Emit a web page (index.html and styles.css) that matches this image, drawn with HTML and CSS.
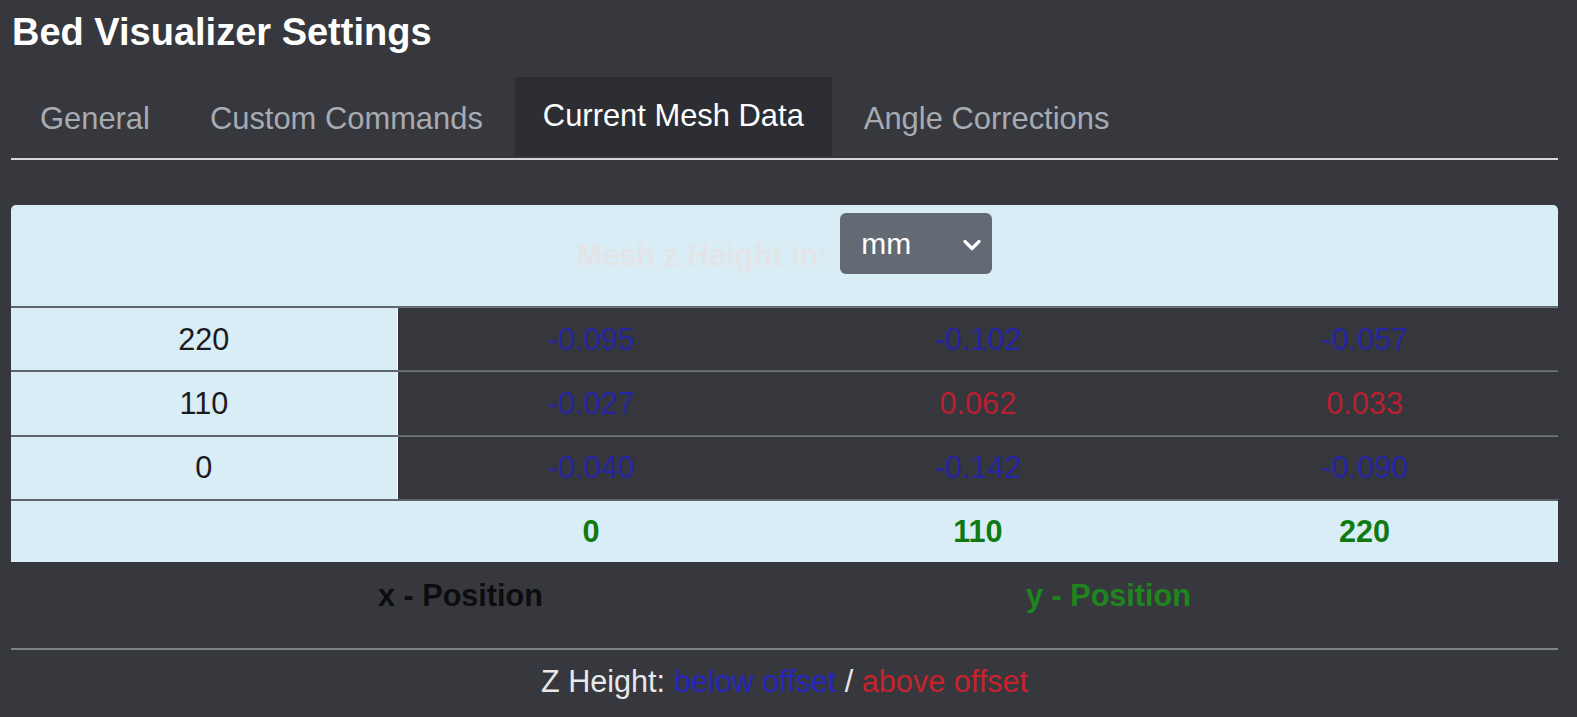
FILE: index.html
```html
<!DOCTYPE html>
<html lang="en">
<head>
<meta charset="utf-8">
<title>Bed Visualizer Settings</title>
<link rel="stylesheet" href="styles.css">
</head>
<body>
  <h1 class="title">Bed Visualizer Settings</h1>
  <ul class="tabs">
    <li class="tab">General</li>
    <li class="tab">Custom Commands</li>
    <li class="tab active">Current Mesh Data</li>
    <li class="tab">Angle Corrections</li>
  </ul>

  <div class="panel">
    <div class="panel-head">
      <span class="unit-label">Mesh z Height in:</span>
      <div class="unit-select">
        <span>mm</span>
        <svg class="chev" width="18" height="12" viewBox="0 0 18 12"><path d="M2 2.5 L9 9.5 L16 2.5" fill="none" stroke="#ffffff" stroke-width="3.2" stroke-linecap="round" stroke-linejoin="round"/></svg>
      </div>
    </div>
    <div class="row">
      <div class="cell axis">220</div>
      <div class="cell below">-0.095</div>
      <div class="cell below">-0.102</div>
      <div class="cell below">-0.057</div>
    </div>
    <div class="row">
      <div class="cell axis">110</div>
      <div class="cell below">-0.027</div>
      <div class="cell above">0.062</div>
      <div class="cell above">0.033</div>
    </div>
    <div class="row">
      <div class="cell axis">0</div>
      <div class="cell below">-0.040</div>
      <div class="cell below">-0.142</div>
      <div class="cell below">-0.090</div>
    </div>
    <div class="row foot">
      <div class="cell"></div>
      <div class="cell ylab">0</div>
      <div class="cell ylab">110</div>
      <div class="cell ylab">220</div>
    </div>
  </div>

  <div class="axes">
    <div class="axis-name x">x - Position</div>
    <div class="axis-name y">y - Position</div>
  </div>

  <hr class="sep">

  <p class="legend">Z Height: <span class="lg-below">below offset</span> / <span class="lg-above">above offset</span></p>
</body>
</html>
```

FILE: styles.css
```css
* { box-sizing: border-box; }

body {
  margin: 0;
  padding: 0 19px 0 11px;
  background: #36383e;
  font-family: "Liberation Sans", Arial, sans-serif;
  font-size: 30.6px;
  color: #e6e6e8;
}

.title {
  margin: 10px 0 0 1px;
  font-size: 38px;
  line-height: 44px;
  font-weight: bold;
  color: #ffffff;
}

.tabs {
  list-style: none;
  margin: 23px 0 0 0;
  padding: 0 0 0 1px;
  display: flex;
  gap: 4px;
  border-bottom: 2px solid #d6d7d9;
}

.tab {
  height: 79px;
  margin-bottom: 2px;
  padding: 5px 28px 0 28px;
  display: flex;
  align-items: center;
  font-size: 30.9px;
  color: #a7abb2;
}

.tab.active {
  background: #2c2e33;
  color: #ffffff;
  padding-top: 0;
  padding-bottom: 1px;
}

.panel {
  margin-top: 45px;
  background: #d9edf7;
  border-radius: 5px 5px 0 0;
}

.panel-head {
  height: 101px;
  display: flex;
  justify-content: center;
  align-items: flex-start;
  gap: 12px;
  padding-top: 8px;
}

.unit-label {
  margin-top: 24px;
  line-height: 36px;
  font-weight: bold;
  color: #e3e4e6;
}

.unit-select {
  width: 152px;
  height: 61px;
  background: #636a74;
  border-radius: 6px;
  display: flex;
  align-items: center;
  justify-content: space-between;
  padding: 0 11px 0 21px;
  color: #ffffff;
  font-size: 30px;
}

.chev { display: block; margin-top: 2px; }

.row {
  display: grid;
  grid-template-columns: repeat(4, 1fr);
  border-top: 2px solid #5f646b;
  height: 64.4px;
}

.cell {
  display: flex;
  align-items: center;
  justify-content: center;
  background: #35373c;
}

.row .cell:not(.axis) { border-top: 1px solid #71757c; margin-top: -1px; }

.cell.axis {
  background: #d9edf7;
  color: #1b1b1d;
  border-right: 1px solid #f4fafd;
}

.below { color: #2525a4; }
.above { color: #b81f30; }

.row.foot {
  background: #d9edf7;
  height: 63px;
}

.row.foot .cell { background: transparent; border-top: none; margin-top: 0; }

.ylab {
  color: #107a12;
  font-weight: bold;
}

.axes {
  display: flex;
  justify-content: center;
  margin-top: 15px;
  line-height: 36px;
  font-weight: bold;
}

.axis-name {
  width: 648px;
  text-align: center;
}

.axis-name.x { color: #0d0d0f; }
.axis-name.y { color: #1e861c; }

.sep {
  margin: 35px 0 0 0;
  border: none;
  border-top: 2px solid #7d8188;
}

.legend {
  margin: 13px 0 0 0;
  line-height: 36px;
  text-align: center;
  color: #e8e8ea;
}

.lg-below { color: #2525bd; }
.lg-above { color: #c8222c; }
```
